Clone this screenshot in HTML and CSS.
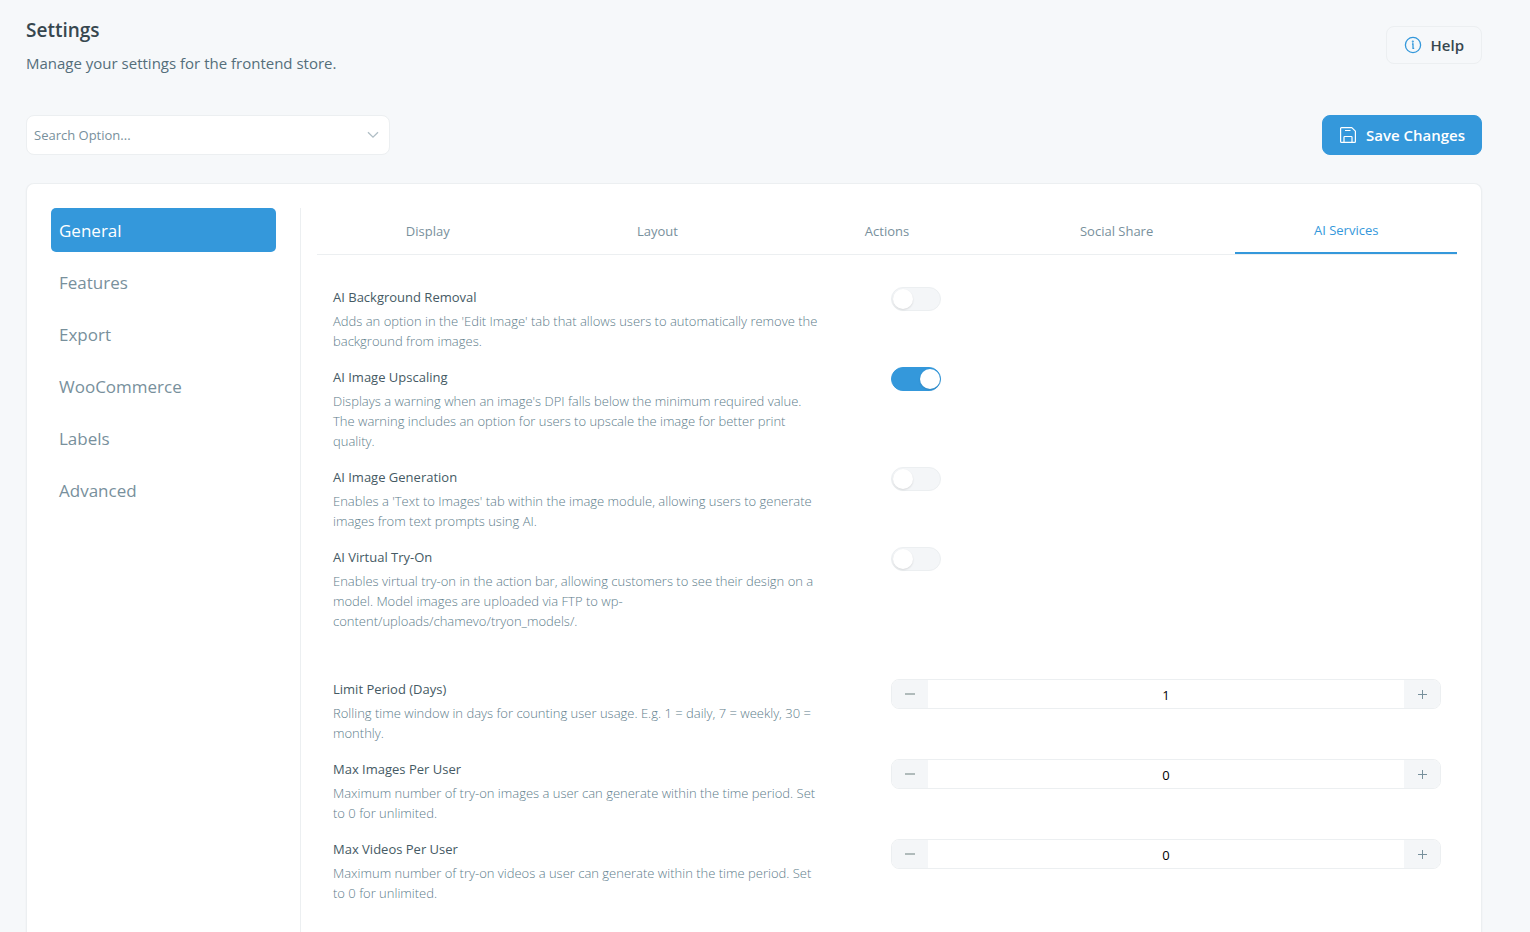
FILE: index.html
```html
<!DOCTYPE html>
<html lang="en">
<head>
  <meta charset="UTF-8">
  <meta name="viewport" content="width=device-width, initial-scale=1">
  <title>Settings</title>
  <link rel="stylesheet" href="styles.css">
</head>
<body>

  <header class="page-header">
    <div>
      <h1>Settings</h1>
      <p>Manage your settings for the frontend store.</p>
    </div>
    <button type="button" class="help-btn">
      <svg width="18" height="18" viewBox="0 0 18 18" fill="none" stroke="currentColor" stroke-width="1.3">
        <circle cx="9" cy="9" r="7.6"/>
        <path d="M8 8h1v4.3h1.2"/>
        <circle cx="8.8" cy="5.6" r=".4"/>
      </svg>
      Help
    </button>
  </header>

  <div class="toolbar">
    <div class="search">
      <select aria-label="Search Option">
        <option>Search Option...</option>
      </select>
      <svg width="12" height="8" viewBox="0 0 12 8" fill="none" stroke="currentColor" stroke-width="1.3">
        <path d="M1 1.2l5 5 5-5"/>
      </svg>
    </div>
    <button type="button" class="save-btn">
      <svg width="18" height="18" viewBox="0 0 18 18" fill="none" stroke="currentColor" stroke-width="1.2" stroke-linejoin="round">
        <path d="M2.5 1.6h10.3l3.6 3.6v10.3a.9.9 0 0 1-.9.9h-13a.9.9 0 0 1-.9-.9v-13a.9.9 0 0 1 .9-.9z"/>
        <path d="M5 16.4v-5.2a.7.7 0 0 1 .7-.7h6.6a.7.7 0 0 1 .7.7v5.2M6 4.5h5.5"/>
      </svg>
      Save Changes
    </button>
  </div>

  <main class="card">
    <nav class="side-menu">
      <a href="#general" class="active">General</a>
      <a href="#features">Features</a>
      <a href="#export">Export</a>
      <a href="#woocommerce">WooCommerce</a>
      <a href="#labels">Labels</a>
      <a href="#advanced">Advanced</a>
    </nav>

    <section class="content">
      <div class="tabs" role="tablist">
        <button type="button" role="tab">Display</button>
        <button type="button" role="tab">Layout</button>
        <button type="button" role="tab">Actions</button>
        <button type="button" role="tab">Social Share</button>
        <button type="button" role="tab" class="active" aria-selected="true">AI Services</button>
      </div>

      <div class="options">
        <div class="group">
          <div class="option">
            <div class="text">
              <label for="bg-removal">AI Background Removal</label>
              <p>Adds an option in the 'Edit Image' tab that allows users to automatically remove the background from images.</p>
            </div>
            <input type="checkbox" class="toggle" id="bg-removal">
          </div>
          <div class="option">
            <div class="text">
              <label for="upscaling">AI Image Upscaling</label>
              <p>Displays a warning when an image's DPI falls below the minimum required value. The warning includes an option for users to upscale the image for better print quality.</p>
            </div>
            <input type="checkbox" class="toggle" id="upscaling" checked>
          </div>
          <div class="option">
            <div class="text">
              <label for="generation">AI Image Generation</label>
              <p>Enables a 'Text to Images' tab within the image module, allowing users to generate images from text prompts using AI.</p>
            </div>
            <input type="checkbox" class="toggle" id="generation">
          </div>
          <div class="option">
            <div class="text">
              <label for="try-on">AI Virtual Try-On</label>
              <p>Enables virtual try-on in the action bar, allowing customers to see their design on a model. Model images are uploaded via FTP to wp-<wbr>content/uploads/chamevo/tryon_models/.</p>
            </div>
            <input type="checkbox" class="toggle" id="try-on">
          </div>
        </div>

        <div class="group">
          <div class="option">
            <div class="text">
              <label for="period">Limit Period (Days)</label>
              <p>Rolling time window in days for counting user usage. E.g. 1 = daily, 7 = weekly, 30 = monthly.</p>
            </div>
            <div class="stepper">
              <button type="button" class="minus" aria-label="Decrease"></button>
              <input type="text" inputmode="numeric" id="period" value="1">
              <button type="button" class="plus" aria-label="Increase"></button>
            </div>
          </div>
          <div class="option">
            <div class="text">
              <label for="max-images">Max Images Per User</label>
              <p>Maximum number of try-on images a user can generate within the time period. Set to 0 for unlimited.</p>
            </div>
            <div class="stepper">
              <button type="button" class="minus" aria-label="Decrease"></button>
              <input type="text" inputmode="numeric" id="max-images" value="0">
              <button type="button" class="plus" aria-label="Increase"></button>
            </div>
          </div>
          <div class="option">
            <div class="text">
              <label for="max-videos">Max Videos Per User</label>
              <p>Maximum number of try-on videos a user can generate within the time period. Set to 0 for unlimited.</p>
            </div>
            <div class="stepper">
              <button type="button" class="minus" aria-label="Decrease"></button>
              <input type="text" inputmode="numeric" id="max-videos" value="0">
              <button type="button" class="plus" aria-label="Increase"></button>
            </div>
          </div>
        </div>
      </div>
    </section>
  </main>

  <script>
    document.querySelectorAll('.stepper').forEach(stepper => {
      const input = stepper.querySelector('input');
      stepper.querySelector('.minus').addEventListener('click', () => {
        input.value = Math.max(0, Number(input.value) - 1);
      });
      stepper.querySelector('.plus').addEventListener('click', () => {
        input.value = Number(input.value) + 1;
      });
    });
  </script>

</body>
</html>
```
FILE: styles.css
```css
* {
  box-sizing: border-box;
}

body {
  font-family: 'Segoe UI', 'Open Sans', 'Noto Sans', sans-serif;
  font-size: 13px;
  line-height: 20px;
  background-color: #f6f8fa;
  color: #546e7a;
  margin: 0;
  padding: 16px 48px 0 26px;
  min-height: 100vh;
  display: flex;
  flex-direction: column;
}

h1, p {
  margin: 0;
}

button, input, select {
  font-family: inherit;
  font-size: inherit;
  margin: 0;
}

button {
  cursor: pointer;
}

.page-header {
  display: flex;
  justify-content: space-between;
  align-items: center;
}

.page-header h1 {
  font-size: 19px;
  line-height: 28px;
  font-weight: 600;
  color: #37474f;
}

.page-header p {
  font-size: 15px;
  line-height: 22px;
  margin-top: 8px;
}

.help-btn, .save-btn {
  display: flex;
  align-items: center;
  gap: 9px;
  padding: 0 17px;
  height: 38px;
  font-size: 15px;
  font-weight: 600;
  color: #37474f;
  background: none;
  border: 1px solid #eceff1;
  border-radius: 8px;
}

.help-btn svg {
  color: #3498db;
}

.toolbar {
  display: flex;
  justify-content: space-between;
  margin: 41px 0 28px;
}

.search {
  position: relative;
  width: 25%;
}

.search select {
  appearance: none;
  width: 100%;
  height: 40px;
  padding: 0 7px;
  color: #78909c;
  background-color: #fff;
  border: 1px solid #eceff1;
  border-radius: 8px;
}

.search svg {
  position: absolute;
  top: 16px;
  right: 11px;
  color: #b0bec5;
  pointer-events: none;
}

.save-btn {
  height: 40px;
  padding: 0 16px;
  color: #fff;
  background-color: #3498db;
  border-color: #3498db;
}

.card {
  flex: 1;
  display: flex;
  padding: 24px 24px 0;
  background-color: #fff;
  border: 1px solid #eceff1;
  border-bottom: none;
  border-radius: 8px 8px 0 0;
  box-shadow: 0 1px 2px rgba(0,0,0,0.05);
}

.side-menu {
  width: 250px;
  flex-shrink: 0;
  padding-right: 24px;
  border-right: 1px solid #eceff1;
}

.side-menu a {
  display: block;
  padding: 12px 8px 10px;
  margin-bottom: 8px;
  font-size: 17px;
  line-height: 22px;
  color: #78909c;
  text-decoration: none;
  border-radius: 5px;
}

.side-menu a.active {
  color: #fff;
  background-color: #3498db;
}

.content {
  flex: 1;
  margin-left: 16px;
}

.tabs {
  display: grid;
  grid-template-columns: repeat(5, 1fr);
  gap: 8px;
  height: 47px;
  border-bottom: 1px solid #eceff1;
}

.tabs button {
  padding: 0;
  color: #78909c;
  background: none;
  border: none;
}

.tabs button.active {
  color: #3498db;
  border-bottom: 2px solid #3498db;
}

.options {
  display: flex;
  flex-direction: column;
  gap: 48px;
  padding: 32px 16px 28px;
}

.group {
  display: flex;
  flex-direction: column;
  gap: 16px;
}

.option {
  display: grid;
  grid-template-columns: 1fr 1fr;
  gap: 8px;
  align-items: start;
}

.text {
  padding-right: 60px;
}

.text label {
  display: block;
  color: #455a64;
}

.text p {
  margin-top: 4px;
  font-weight: 300;
  color: #607d8b;
}

.toggle {
  appearance: none;
  width: 50px;
  height: 24px;
  padding: 1px;
  background-color: #f4f6f8;
  border: 1px solid #eceff1;
  border-radius: 12px;
}

.toggle::before {
  content: '';
  display: block;
  width: 20px;
  height: 20px;
  border-radius: 50%;
  background-color: #fff;
  box-shadow: 0 1px 2px rgba(0,0,0,0.12);
}

.toggle:checked {
  padding-right: 0;
  background-color: #3498db;
  border-color: #3498db;
}

.toggle:checked::before {
  margin-left: auto;
}

.stepper {
  display: flex;
  height: 30px;
  border: 1px solid #eceff1;
  border-radius: 8px;
  overflow: hidden;
}

.stepper input {
  flex: 1;
  min-width: 0;
  padding: 2px 0 0;
  text-align: center;
  color: #000;
  border: none;
}

.stepper button {
  width: 36px;
  padding: 0;
  border: none;
  background: linear-gradient(#b0bbbb, #b0bbbb) center / 10px 2px no-repeat #f4f6f8;
}

.stepper .plus {
  background:
    linear-gradient(#78909c, #78909c) center / 9px 1px no-repeat,
    linear-gradient(#78909c, #78909c) center / 1px 9px no-repeat #f4f6f8;
}
```
